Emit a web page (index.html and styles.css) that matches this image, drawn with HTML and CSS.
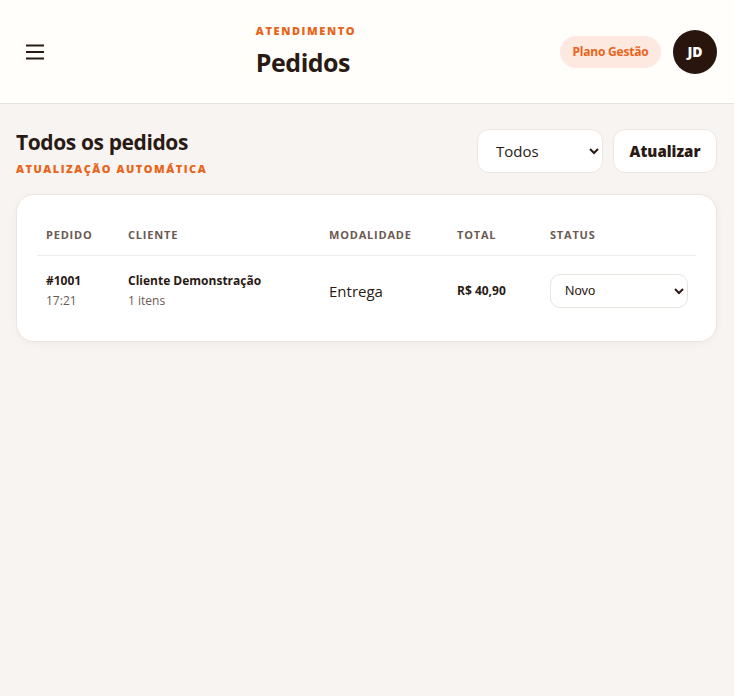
FILE: index.html
```html
<!DOCTYPE html>
<html lang="pt-BR">
<head>
<meta charset="utf-8">
<title>Pedidos</title>
<link rel="stylesheet" href="styles.css">
</head>
<body>
<header class="topbar">
  <button class="menu-btn" aria-label="Menu">
    <svg width="18" height="16" viewBox="0 0 18 16"><path d="M0 1.5H18M0 8H18M0 14.5H18" stroke="#2a1a14" stroke-width="2"/></svg>
  </button>
  <div class="title-block">
    <div class="eyebrow">ATENDIMENTO</div>
    <h1 class="page-title">Pedidos</h1>
  </div>
  <div class="top-right">
    <span class="plan-pill">Plano Gestão</span>
    <span class="avatar">JD</span>
  </div>
</header>
<main class="content">
  <div class="section-head">
    <div>
      <h2 class="section-title">Todos os pedidos</h2>
      <div class="section-sub">ATUALIZAÇÃO AUTOMÁTICA</div>
    </div>
    <div class="actions">
      <select class="filter-select"><option>Todos</option></select>
      <button class="refresh-btn">Atualizar</button>
    </div>
  </div>
  <div class="card">
    <table class="orders">
      <thead>
        <tr>
          <th class="c-pedido">PEDIDO</th>
          <th class="c-cliente">CLIENTE</th>
          <th class="c-mod">MODALIDADE</th>
          <th class="c-total">TOTAL</th>
          <th class="c-status">STATUS</th>
        </tr>
      </thead>
      <tbody>
        <tr>
          <td><div class="strong">#1001</div><div class="muted">17:21</div></td>
          <td><div class="strong">Cliente Demonstração</div><div class="muted">1 itens</div></td>
          <td class="mod">Entrega</td>
          <td class="strong">R$ 40,90</td>
          <td><select class="status-select"><option>Novo</option></select></td>
        </tr>
      </tbody>
    </table>
  </div>
</main>
</body>
</html>
```
FILE: styles.css
```css
* { box-sizing: border-box; }
html, body { margin: 0; padding: 0; }
body {
  background: #f8f4f1;
  font-family: "Open Sans", "Noto Sans", sans-serif;
  color: #2a1a14;
  min-height: 696px;
}
.topbar {
  height: 104px;
  background: #fffefb;
  border-bottom: 1px solid #e6e1dc;
  display: flex;
  align-items: center;
  justify-content: space-between;
  padding: 0 17px 0 16px;
}
.menu-btn {
  width: 36px;
  height: 36px;
  border: none;
  background: transparent;
  padding: 0 0 0 10px;
  display: flex;
  align-items: center;
  cursor: pointer;
}
.title-block { display: flex; flex-direction: column; margin-top: -2px; }
.eyebrow {
  font-size: 11px;
  font-weight: 800;
  letter-spacing: 1.6px;
  color: #e8641a;
  line-height: 14px;
}
.page-title {
  margin: 8px 0 0;
  font-size: 25px;
  font-weight: 700;
  letter-spacing: -0.5px;
  line-height: 32px;
}
.top-right { display: flex; align-items: center; gap: 12px; }
.plan-pill {
  background: #fde9df;
  color: #e8641a;
  font-size: 12px;
  font-weight: 700;
  height: 32px;
  width: 101px;
  display: flex;
  align-items: center;
  justify-content: center;
  border-radius: 16px;
  letter-spacing: -0.2px;
}
.avatar {
  width: 44px;
  height: 44px;
  border-radius: 50%;
  background: #2a140e;
  color: #fff;
  font-size: 14px;
  font-weight: 800;
  display: flex;
  align-items: center;
  justify-content: center;
}
.content { padding: 25px 17px 0 16px; }
.section-head {
  display: flex;
  justify-content: space-between;
  align-items: flex-start;
}
.section-title {
  margin: 0;
  font-size: 21px;
  font-weight: 700;
  letter-spacing: -0.4px;
  line-height: 26px;
}
.section-sub {
  margin-top: 7px;
  font-size: 11px;
  font-weight: 800;
  letter-spacing: 1.5px;
  color: #e8641a;
  line-height: 14px;
}
.actions { display: flex; gap: 10px; }
.filter-select {
  width: 126px;
  height: 44px;
  border: 1px solid #ece6e1;
  border-radius: 12px;
  background: #fff;
  font-family: "Open Sans", sans-serif;
  font-size: 15px;
  color: #2a1a14;
  padding: 0 10px 0 14px;
}
.refresh-btn {
  width: 104px;
  height: 44px;
  border: 1px solid #ece6e1;
  border-radius: 12px;
  background: #fff;
  font-family: "Open Sans", sans-serif;
  font-size: 15px;
  font-weight: 800;
  color: #2a1a14;
}
.card {
  margin-top: 18px;
  background: #fff;
  border: 1px solid #ebe6e1;
  border-radius: 18px;
  padding: 20px 20px 19px;
  box-shadow: 0 2px 8px rgba(60, 30, 10, 0.04);
}
.orders {
  width: 100%;
  border-collapse: collapse;
  table-layout: fixed;
}
.orders th {
  text-align: left;
  font-size: 11px;
  font-weight: 700;
  letter-spacing: 0.8px;
  color: #6b5a52;
  padding: 13px 10px 13px 9px;
  border-bottom: 1px solid #efebe7;
  line-height: 14px;
}
.c-pedido { width: 82px; }
.c-cliente { width: 201px; }
.c-mod { width: 128px; }
.c-total { width: 93px; }
.orders td {
  padding: 15px 10px 12px 9px;
  vertical-align: middle;
  font-size: 12px;
}
.strong { font-weight: 700; font-size: 12px; color: #2a1a14; line-height: 20px; }
.muted { color: #6b5a52; font-size: 12px; line-height: 19px; }
.orders td.mod { font-size: 15px; color: #2a1a14; }
.status-select {
  width: 138px;
  height: 34px;
  border: 1px solid #e9e3de;
  border-radius: 10px;
  background: #fff;
  font-family: "Liberation Sans", Arial, sans-serif;
  font-size: 13px;
  color: #2a1a14;
  padding: 0 6px 0 10px;
}
```
